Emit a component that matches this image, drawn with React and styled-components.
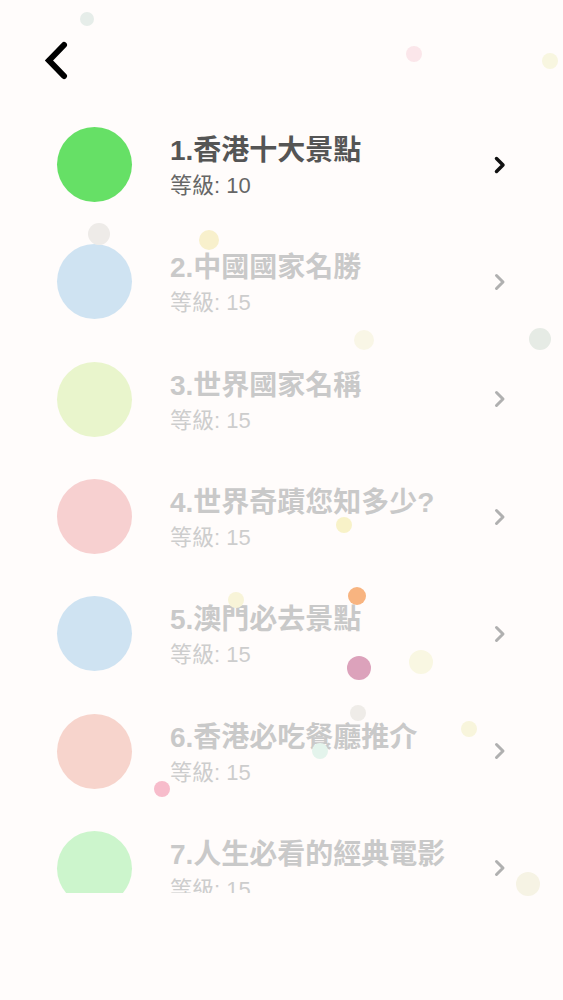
import React from 'react';
import styled, { createGlobalStyle } from 'styled-components';

const GlobalStyle = createGlobalStyle`
  html, body {
    margin: 0;
    padding: 0;
    background: #fffcfb;
    font-family: "Liberation Sans", "Noto Sans CJK TC", sans-serif;
  }
`;

const items = [
  { title: '1.香港十大景點', level: 10, color: '#66e066', active: true },
  { title: '2.中國國家名勝', level: 15, color: '#cfe3f2' },
  { title: '3.世界國家名稱', level: 15, color: '#e9f5cc' },
  { title: '4.世界奇蹟您知多少?', level: 15, color: '#f7d0d0' },
  { title: '5.澳門必去景點', level: 15, color: '#cfe3f2' },
  { title: '6.香港必吃餐廳推介', level: 15, color: '#f7d4cc' },
  { title: '7.人生必看的經典電影', level: 15, color: '#ccf5cc' },
];

const dots = [
  { x: 87, y: 19, r: 7, c: '#e6ede9' },
  { x: 414, y: 54, r: 8, c: '#fbe6ea' },
  { x: 550, y: 61, r: 8, c: '#f8f6e0' },
  { x: 99, y: 234, r: 11, c: '#eeebe8' },
  { x: 209, y: 240, r: 10, c: '#f8f0cc' },
  { x: 364, y: 340, r: 10, c: '#f9f6e6' },
  { x: 540, y: 339, r: 11, c: '#e6ebe5' },
  { x: 344, y: 525, r: 8, c: '#f8f2c8' },
  { x: 236, y: 600, r: 8, c: '#f8f4d8' },
  { x: 357, y: 596, r: 9, c: '#f8b480' },
  { x: 359, y: 668, r: 12, c: '#dca2bb' },
  { x: 421, y: 662, r: 12, c: '#f9f7e2' },
  { x: 358, y: 713, r: 8, c: '#efece8' },
  { x: 320, y: 751, r: 8, c: '#e4f4ec' },
  { x: 469, y: 729, r: 8, c: '#f8f5dc' },
  { x: 162, y: 789, r: 8, c: '#f7bccb' },
  { x: 528, y: 884, r: 12, c: '#f6f3e4' },
];

const Screen = styled.div`
  position: relative;
  width: 563px;
  height: 1000px;
  overflow: hidden;
`;

const Header = styled.div`
  height: 106px;
  display: flex;
  align-items: flex-start;
  padding: 41px 0 0 42px;
  box-sizing: border-box;
`;

const List = styled.div`
  height: 787px;
  overflow: hidden;
  display: flex;
  flex-direction: column;
`;

const Row = styled.div`
  flex: 0 0 117.3px;
  display: flex;
  align-items: center;
  padding: 0 56px 0 57px;
  box-sizing: border-box;
`;

const Circle = styled.div`
  width: 75px;
  height: 75px;
  border-radius: 50%;
  background: ${(p) => p.$color};
  flex-shrink: 0;
`;

const Text = styled.div`
  flex: 1;
  margin-left: 38px;
  display: flex;
  flex-direction: column;
  margin-top: 5px;
`;

const Title = styled.div`
  font-size: 28px;
  font-weight: bold;
  line-height: 30px;
  white-space: nowrap;
  color: ${(p) => (p.$active ? '#555555' : '#c9c9c9')};
`;

const Level = styled.div`
  font-size: 22px;
  line-height: 24px;
  margin-top: 8px;
  color: ${(p) => (p.$active ? '#666666' : '#cdcdcd')};
`;

const Dot = styled.div`
  position: absolute;
  border-radius: 50%;
  pointer-events: none;
`;

const Chevron = ({ color, bold }) => (
  <svg width="14" height="20" viewBox="0 0 14 20">
    <path
      d="M3.5 3.5 L10 10 L3.5 16.5"
      fill="none"
      stroke={color}
      strokeWidth={bold ? 3.5 : 3}
      strokeLinecap="round"
      strokeLinejoin="round"
    />
  </svg>
);

const BackArrow = () => (
  <svg width="30" height="40" viewBox="0 0 30 40">
    <path d="M22 4 L7 19.5 L22 35" fill="none" stroke="#000" strokeWidth="6" strokeLinecap="round" strokeLinejoin="miter" />
  </svg>
);

export default function App() {
  return (
    <Screen>
      <GlobalStyle />
      <Header>
        <BackArrow />
      </Header>
      <List>
        {items.map((it) => (
          <Row key={it.title}>
            <Circle $color={it.color} />
            <Text>
              <Title $active={it.active}>{it.title}</Title>
              <Level $active={it.active}>等級: {it.level}</Level>
            </Text>
            <Chevron color={it.active ? '#111' : '#b0b0b0'} bold={it.active} />
          </Row>
        ))}
      </List>
      {dots.map((d, i) => (
        <Dot
          key={i}
          style={{ left: d.x - d.r, top: d.y - d.r, width: d.r * 2, height: d.r * 2, background: d.c }}
        />
      ))}
    </Screen>
  );
}
